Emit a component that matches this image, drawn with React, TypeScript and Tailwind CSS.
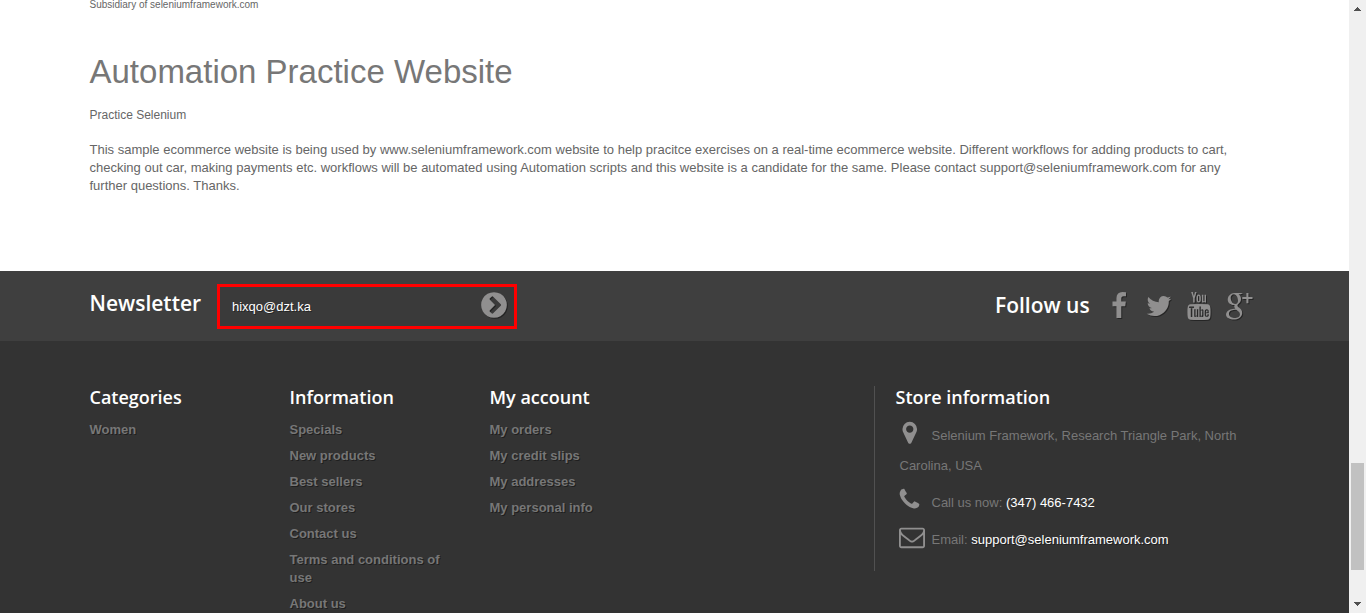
import React from "react";
import { TfiGoogle } from "react-icons/tfi";

type IconProps = { d: string; className?: string; viewBox?: string };

const shadow = "[filter:drop-shadow(1px_1px_0_rgba(0,0,0,0.4))]";

function Icon({ d, className = "", viewBox = "0 0 1792 1792" }: IconProps) {
  return (
    <svg viewBox={viewBox} className={`shrink-0 fill-current ${className}`}>
      <path d={d} />
    </svg>
  );
}

const FACEBOOK =
  "M1343 12v264h-157q-86 0-116 36t-30 108v189h293l-39 296h-254v759h-306v-759h-255v-296h255v-218q0-186 104-288.5t277-102.5q147 0 228 12z";
const TWITTER =
  "M1684 408q-67 98-162 167 1 14 1 42 0 130-38 259.5t-115.5 248.5-184.5 210.5-258 146-323 54.5q-271 0-496-145 35 4 78 4 225 0 401-138-105-2-188-64.5t-114-159.5q33 5 61 5 43 0 85-11-112-23-185.5-111.5t-73.5-205.5v-4q68 38 146 41-66-44-105-115t-39-154q0-88 44-163 121 149 294.5 238.5t371.5 99.5q-8-38-8-74 0-134 94.5-228.5t228.5-94.5q140 0 236 102 109-21 205-78-37 115-142 178 93-10 186-50z";
const YOUTUBE =
  "M1099 1244v211q0 67-39 67-23 0-45-22v-301q22-22 45-22 39 0 39 67zm338 1v46h-90v-46q0-68 45-68t45 68zm-966-218h107v-94h-312v94h105v569h100v-569zm288 569h89v-494h-89v378q-30 42-57 42-18 0-21-21-1-3-1-35v-364h-89v391q0 49 8 73 12 37 58 37 48 0 102-61v54zm429-148v-197q0-73-9-99-17-56-71-56-50 0-93 54v-217h-89v663h89v-48q45 55 93 55 54 0 71-55 9-27 9-100zm338-10v-13h-91q0 51-2 61-7 36-40 36-46 0-46-69v-87h179v-103q0-79-27-116-39-51-106-51-68 0-107 51-28 37-28 116v173q0 79 29 116 39 51 108 51 72 0 108-53 18-27 21-54 2-9 2-58zm-608-913v-210q0-69-43-69t-43 69v210q0 70 43 70t43-70zm719 751q0 234-26 350-14 59-58 99t-102 46q-184 21-555 21t-555-21q-58-6-102.5-46t-57.5-99q-26-112-26-350 0-234 26-350 14-59 58-99t103-47q183-20 554-20t555 20q58 7 102.5 47t57.5 99q26 112 26 350zm-998-1276h102l-121 399v271h-100v-271q-14-74-61-212-37-103-65-187h106l71 263zm370 333v175q0 81-28 118-38 51-106 51-67 0-105-51-28-38-28-118v-175q0-80 28-117 38-51 105-51 68 0 106 51 28 37 28 117zm335-162v499h-91v-55q-53 62-103 62-46 0-59-37-8-24-8-75v-394h91v367q0 33 1 35 3 22 21 22 27 0 57-43v-381h91z";
const CHEVRON =
  "M845 1395l454-454q19-19 19-45t-19-45l-454-454q-19-19-45-19t-45 19l-102 102q-19 19-19 45t19 45l307 307-307 307q-19 19-19 45t19 45l102 102q19 19 45 19t45-19zm819-499q0 209-103 385.5t-279.5 279.5-385.5 103-385.5-103-279.5-279.5-103-385.5 103-385.5 279.5-279.5 385.5-103 385.5 103 279.5 279.5 103 385.5z";
const PHONE =
  "M1600 1240q0 27-10 70.5t-21 68.5q-21 50-122 106-94 51-186 51-27 0-53-3.5t-57.5-12.5-47-14.5-55.5-20.5-49-18q-98-35-175-83-127-79-264-216t-216-264q-48-77-83-175-3-9-18-49t-20.5-55.5-14.5-47-12.5-57.5-3.5-53q0-92 51-186 56-101 106-122 25-11 68.5-21t70.5-10q14 0 21 3 18 6 53 76 11 19 30 54t35 63.5 31 53.5q3 4 17.5 25t21.5 35.5 7 28.5q0 20-28.5 50t-62 55-62 53-28.5 46q0 9 5 22.5t8.5 20.5 14 24 11.5 19q76 137 174 235t235 174q2 1 19 11.5t24 14 20.5 8.5 22.5 5q18 0 46-28.5t53-62 55-62 50-28.5q14 0 28.5 7t35.5 21.5 25 17.5q25 15 53.5 31t63.5 35 54 30q70 35 76 53 3 7 3 21z";
const MARKER =
  "M1152 640q0-106-75-181t-181-75-181 75-75 181 75 181 181 75 181-75 75-181zm256 0q0 109-33 179l-364 774q-16 33-47.5 52t-67.5 19-67.5-19-46.5-52l-365-774q-33-70-33-179 0-212 150-362t362-150 362 150 150 362z";
const ENVELOPE =
  "M1664 1504v-768q-32 36-69 66-268 206-426 338-51 43-83 67t-86.5 48.5-102.5 24.5h-2q-48 0-102.5-24.5t-86.5-48.5-83-67q-158-132-426-338-37-30-69-66v768q0 13 9.5 22.5t22.5 9.5h1472q13 0 22.5-9.5t9.5-22.5zm0-1051v-24.5l-.5-13-3-12.5-5.5-9-9-7.5-14-2.5h-1472q-13 0-22.5 9.5t-9.5 22.5q0 168 147 284 193 152 401 317 6 5 35 29.5t46 37.5 44.5 31.5 50.5 27.5 43 9h2q20 0 43-9t50.5-27.5 44.5-31.5 46-37.5 35-29.5q208-165 401-317 54-43 100.5-115.5t46.5-131.5zm128-37v1088q0 66-47 113t-113 47h-1472q-66 0-113-47t-47-113v-1088q0-66 47-113t113-47h1472q66 0 113 47t47 113z";

const columns = [
  { title: "Categories", links: ["Women"] },
  {
    title: "Information",
    links: ["Specials", "New products", "Best sellers", "Our stores", "Contact us", "Terms and conditions of use", "About us"],
  },
  { title: "My account", links: ["My orders", "My credit slips", "My addresses", "My personal info"] },
];

function Heading({ children }: { children: React.ReactNode }) {
  return (
    <h4 className="font-['Open_Sans',sans-serif] text-[18px] font-semibold leading-[22px] text-white">{children}</h4>
  );
}

function Intro() {
  return (
    <section className="h-[271px] pl-[89.5px] text-[#666]">
      <p className="h-[53px] text-[10px] leading-[10px]">Subsidiary of seleniumframework.com</p>
      <h1 className="h-[53px] text-[33px] leading-[38px] text-[#777]">Automation Practice Website</h1>
      <p className="h-[35px] text-[12px] leading-[18px]">Practice Selenium</p>
      <p className="w-[1150px] text-[13px] leading-[18px]">
        This sample ecommerce website is being used by www.seleniumframework.com website to help pracitce exercises on
        a real-time ecommerce website. Different workflows for adding products to cart, checking out car, making
        payments etc. workflows will be automated using Automation scripts and this website is a candidate for the
        same. Please contact support@seleniumframework.com for any further questions. Thanks.
      </p>
    </section>
  );
}

function NewsletterBar() {
  return (
    <section className="flex h-[70px] items-start bg-[#3f3f3f] pl-[89.5px] text-[#908f8f]">
      <h4 className="mt-[18px] w-[127.5px] font-['Open_Sans',sans-serif] text-[21px] font-semibold leading-[28px] text-white">
        Newsletter
      </h4>
      <form className="mt-[13px] flex h-[45px] w-[300px] items-center border-[3px] border-[#ff0000] bg-[#3a3a3a] pl-[12px]">
        <span className="flex-1 text-[13px] text-white [text-shadow:1px_1px_0_rgba(0,0,0,0.4)]">hixqo@dzt.ka</span>
        <Icon d={CHEVRON} className={`mr-[5px] mb-[3px] size-[30px] ${shadow}`} />
      </form>
      <h4 className="ml-[478px] mt-[20px] w-[110px] font-['Open_Sans',sans-serif] text-[21px] font-semibold leading-[28px] text-white">
        Follow us
      </h4>
      <div className="mt-[21px] flex">
        <Icon d={FACEBOOK} className={`mr-[12px] size-[28px] ${shadow}`} />
        <Icon d={TWITTER} className={`mr-[12px] size-[28px] ${shadow}`} />
        <Icon d={YOUTUBE} className={`mr-[13px] size-[28px] ${shadow}`} />
        <TfiGoogle className={`mt-px size-[26.5px] shrink-0 ${shadow}`} />
      </div>
    </section>
  );
}

function Footer() {
  return (
    <footer className="flex h-[272px] overflow-hidden bg-[#333] pl-[89.5px] pt-[45px]">
      {columns.map((column) => (
        <nav key={column.title} className="w-[200px] shrink-0">
          <Heading>{column.title}</Heading>
          <ul className="mt-[13px] flex w-[170px] flex-col gap-[8px] text-[13px] font-bold leading-[18px] text-[#777] [text-shadow:1px_1px_0_rgba(0,0,0,0.4)]">
            {column.links.map((link) => (
              <li key={link}>{link}</li>
            ))}
          </ul>
        </nav>
      ))}
      <section className="ml-[184.5px] h-[185px] w-[385px] border-l border-[#515151] pl-[20.5px] text-[13px] text-[#777]">
        <Heading>Store information</Heading>
        <div className="ml-[4px] text-[#908f8f]">
          <div className="flex h-[68px]">
            <Icon d={MARKER} className="ml-[-2.5px] mt-[12px] size-[25.5px]" />
            <p className="ml-[-23px] mt-[13px] w-[345px] indent-[32px] leading-[30px] text-[#777]">
              Selenium Framework, Research Triangle Park, North Carolina, USA
            </p>
          </div>
          <div className="flex h-[37px]">
            <Icon d={PHONE} className="ml-[-3px] mt-[11px] size-[25px]" />
            <p className="ml-[10px] mt-[12px] leading-[30px] text-[#777]">
              Call us now: <span className="text-white">(347) 466-7432</span>
            </p>
          </div>
          <div className="flex h-[37px]">
            <Icon d={ENVELOPE} className="ml-[-0.5px] mt-[11px] size-[26px]" />
            <p className="ml-[6.5px] mt-[12px] leading-[30px] text-[#777]">
              Email:{" "}
              <span className="text-white [text-shadow:1px_1px_0_rgba(0,0,0,0.4)]">support@seleniumframework.com</span>
            </p>
          </div>
        </div>
      </section>
    </footer>
  );
}

function Scrollbar() {
  return (
    <aside className="flex w-[17px] shrink-0 flex-col items-center bg-[#f0f0f0] text-[#505050]">
      <Icon viewBox="0 0 7 4" d="M3 0h1v1h1v1h1v1h1v1H0V3h1V2h1V1h1z" className="mt-[7px] h-[4px] w-[7px]" />
      <div className="mt-[452px] h-[107px] w-[13px] bg-[#c1c1c1]" />
      <Icon viewBox="0 0 7 4" d="M0 0h7v1H6v1H5v1H4v1H3V3H2V2H1V1H0z" className="mt-[32px] h-[4px] w-[7px]" />
    </aside>
  );
}

export default function App() {
  return (
    <div className="flex h-[613px] w-[1366px] overflow-hidden bg-white font-['Liberation_Sans',Arial,sans-serif]">
      <main className="w-[1349px] shrink-0">
        <Intro />
        <NewsletterBar />
        <Footer />
      </main>
      <Scrollbar />
    </div>
  );
}
